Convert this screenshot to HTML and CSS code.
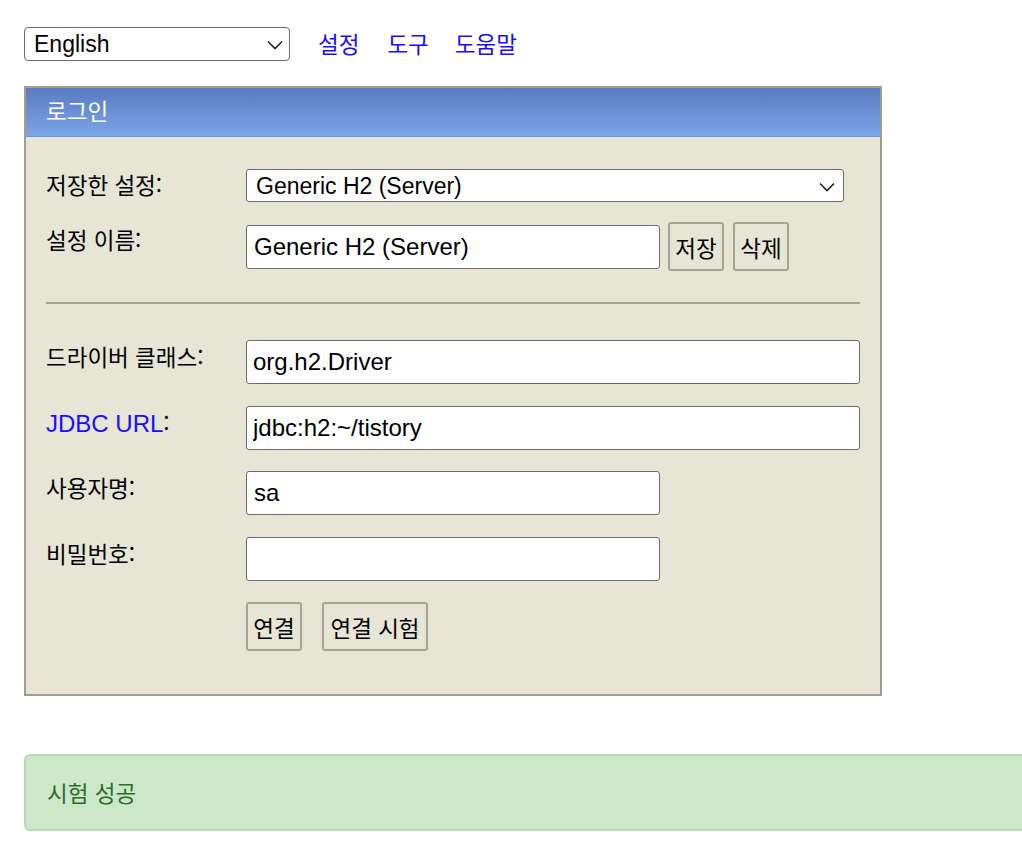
FILE: index.html
```html
<!DOCTYPE html>
<html lang="ko">
<head>
    <meta charset="UTF-8">
    <meta name="viewport" content="width=device-width, initial-scale=1.0">
    <title>H2 Console</title>
    <link rel="stylesheet" href="styles.css">
</head>
<body>
    <div class="topbar">
        <div class="select-wrap lang-wrap">
            <select class="lang-select">
                <option>English</option>
            </select>
            <svg class="chevron" width="16" height="10" viewBox="0 0 16 10"><path d="M1 1.5 L8 8.5 L15 1.5" fill="none" stroke="#222" stroke-width="1.6"/></svg>
        </div>
        <a href="#" class="top-link">설정</a>
        <a href="#" class="top-link">도구</a>
        <a href="#" class="top-link">도움말</a>
    </div>

    <div class="login">
        <div class="login-header">로그인</div>
        <div class="login-body">
            <div class="row row-first">
                <div class="label label-mid">저장한 설정:</div>
                <div class="select-wrap">
                    <select class="field field-select">
                        <option>Generic H2 (Server)</option>
                    </select>
                    <svg class="chevron" width="16" height="10" viewBox="0 0 16 10"><path d="M1 1.5 L8 8.5 L15 1.5" fill="none" stroke="#222" stroke-width="1.6"/></svg>
                </div>
            </div>

            <div class="row row-save">
                <div class="label">설정 이름:</div>
                <input class="field field-short" type="text" value="Generic H2 (Server)">
                <button class="btn btn-save">저장</button>
                <button class="btn btn-del">삭제</button>
            </div>

            <hr class="divider">

            <div class="row row-driver">
                <div class="label">드라이버 클래스:</div>
                <input class="field field-long" type="text" value="org.h2.Driver">
            </div>

            <div class="row">
                <div class="label"><a href="#" class="label-link">JDBC URL</a>:</div>
                <input class="field field-long" type="text" value="jdbc:h2:~/tistory">
            </div>

            <div class="row row-tight">
                <div class="label">사용자명:</div>
                <input class="field field-short" type="text" value="sa">
            </div>

            <div class="row">
                <div class="label">비밀번호:</div>
                <input class="field field-short" type="password" value="">
            </div>

            <div class="row row-tight">
                <div class="label"></div>
                <button class="btn btn-connect">연결</button>
                <button class="btn btn-test">연결 시험</button>
            </div>
        </div>
    </div>

    <div class="result">시험 성공</div>
</body>
</html>
```

FILE: styles.css
```css
html, body {
    overflow-x: hidden;
}

body {
    margin: 0;
    padding: 27px 0 0 24px;
    font-family: 'Noto Sans CJK KR', sans-serif;
    font-size: 22.5px;
    color: #000;
    background: #fff;
}

.topbar {
    display: flex;
    align-items: center;
    height: 34px;
}

.select-wrap {
    position: relative;
    display: flex;
}

.select-wrap select {
    appearance: none;
    -webkit-appearance: none;
}

.chevron {
    position: absolute;
    right: 9px;
    top: 50%;
    margin-top: -4px;
    pointer-events: none;
}

.lang-select {
    box-sizing: border-box;
    width: 266px;
    height: 34px;
    font-family: 'Liberation Sans', sans-serif;
    font-size: 23px;
    padding: 0 9px;
    border: 1px solid #6b6b6b;
    border-radius: 4px;
    background: #fff;
    color: #000;
}

.lang-wrap .chevron {
    right: 7px;
}

.top-link {
    color: #1a0dff;
    text-decoration: none;
    margin-left: 28px;
    line-height: 30px;
    margin-bottom: 2px;
}

.top-link:last-child {
    margin-left: 26px;
}

.login {
    margin-top: 25px;
    width: 854px;
    border: 2px solid #a19e8b;
    background-color: #e7e5d5;
}

.login-header {
    height: 48px;
    line-height: 44px;
    padding-left: 20px;
    color: #fff;
    background: linear-gradient(to bottom, #5a7bbf, #7ba4ea);
    border-bottom: 1px solid #6e92d6;
}

.login-body {
    padding: 32px 20px 43px 20px;
}

.row {
    display: flex;
    align-items: flex-start;
    margin-top: 22px;
}

.row-tight {
    margin-top: 21px;
}

.row-first {
    margin-top: 0;
    align-items: center;
}

.row-save {
    margin-top: 20px;
    align-items: center;
}

.row-driver {
    margin-top: 36px;
}

.label {
    width: 200px;
    flex-shrink: 0;
    padding-top: 3px;
    line-height: 26px;
}

.label-mid {
    padding-top: 0;
    padding-bottom: 3px;
}

.row-save .label {
    align-self: flex-start;
    padding-top: 4px;
}

.label-link {
    color: #1a0dff;
    text-decoration: none;
    font-family: 'Liberation Sans', sans-serif;
    font-size: 24px;
}

.field {
    box-sizing: border-box;
    font-family: 'Liberation Sans', sans-serif;
    font-size: 24px;
    color: #000;
    background: #fff;
    border: 1px solid #6b6b6b;
    border-radius: 3px;
}

.field-select {
    width: 598px;
    height: 33px;
    padding: 0 9px;
    font-size: 23px;
}

.field-short {
    width: 414px;
    height: 44px;
    padding: 0 7px;
}

.field-long {
    width: 614px;
    height: 44px;
    padding: 0 6px;
}

.btn {
    box-sizing: border-box;
    height: 49px;
    padding: 0;
    font-family: 'Noto Sans CJK KR', sans-serif;
    font-size: 22.5px;
    color: #000;
    background-color: #e7e5d5;
    border: 2px solid #a5a393;
    border-radius: 3px;
    cursor: pointer;
}

.btn-save {
    margin-left: 8px;
    width: 56px;
}

.btn-del {
    margin-left: 9px;
    width: 56px;
}

.btn-connect {
    width: 56px;
}

.btn-test {
    margin-left: 20px;
    width: 106px;
}

.divider {
    margin: 31px 0 0 0;
    height: 0;
    border: none;
    border-top: 2px solid #a3a193;
}

.result {
    margin-top: 58px;
    width: 1040px;
    height: 77px;
    box-sizing: border-box;
    padding-left: 21px;
    line-height: 72px;
    color: #2f6a2c;
    background-color: #cce8c9;
    border: 2px solid #bcd9b5;
    border-radius: 6px;
}
```
